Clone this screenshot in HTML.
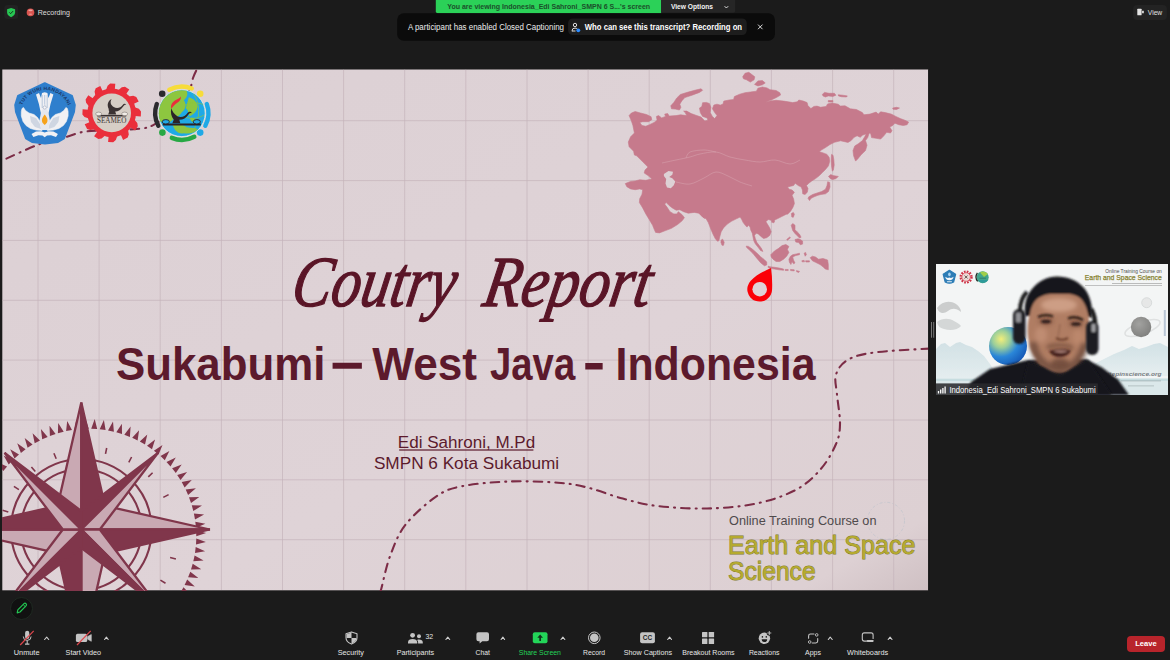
<!DOCTYPE html>
<html lang="en">
<head>
<meta charset="utf-8">
<title>Zoom Meeting</title>
<style>
*{box-sizing:border-box;margin:0;padding:0}
html,body{width:1170px;height:660px;overflow:hidden;background:#1b1b1b}
body{position:relative;font-family:"Liberation Sans",sans-serif;color:#e6e6e6}
.abs{position:absolute}
.t{position:absolute;white-space:nowrap;line-height:1}
/* slide */
#slide{left:0;top:0;width:1170px;height:660px;overflow:hidden}
/* thumb */
#thumb{left:936px;top:264px;width:232px;height:131px;overflow:hidden;background:#eef0f0}
/* toolbar */
#leave{left:1127.3px;top:635.5px;width:37.4px;height:16.3px;border-radius:4px;background:#b8242b}
#leave .t{left:0;width:37.4px;text-align:center;top:4.3px;font-size:7.6px;color:#fff;font-weight:bold}
#pen{left:10.3px;top:596.5px;width:23px;height:23px;border-radius:50%;background:#111;border:1px solid #1f2a22}
</style>
</head>
<body>
<!-- slide -->
<div class="abs" id="slide">
<svg id="slidesvg" width="1170" height="660" viewBox="0 0 1170 660">
<clipPath id="slideclip"><rect x="0" y="-0.5" width="927" height="522"/></clipPath>
<g transform="translate(2,69.5)" clip-path="url(#slideclip)">
<defs><linearGradient id="bgg" x1="0" y1="0" x2="1" y2="1"><stop offset="0" stop-color="#dcd0d4"/><stop offset="0.6" stop-color="#dfd3d7"/><stop offset="0.93" stop-color="#ddd0d3"/><stop offset="1" stop-color="#cfc0c3"/></linearGradient></defs>
<rect x="0.3" y="0" width="926" height="520.8" fill="url(#bgg)"/>
<path d="M36.0,0.3V520.5M97.1,0.3V520.5M158.2,0.3V520.5M219.4,0.3V520.5M280.5,0.3V520.5M341.6,0.3V520.5M402.7,0.3V520.5M463.8,0.3V520.5M525.0,0.3V520.5M586.1,0.3V520.5M647.2,0.3V520.5M708.3,0.3V520.5M769.4,0.3V520.5M830.6,0.3V520.5M891.7,0.3V520.5M0.5,51.2H926M0.5,111.1H926M0.5,170.9H926M0.5,230.8H926M0.5,290.6H926M0.5,350.5H926M0.5,410.3H926M0.5,470.2H926" stroke="#c4b4ba" stroke-width="1" fill="none" opacity="0.7"/>
<path d="M378.3,522.5C378.5,522.0 377.6,525.3 379.3,519.2C381.0,513.1 384.2,496.6 388.3,485.9C392.4,475.2 395.9,464.9 403.6,455.1C411.3,445.3 425.0,433.3 434.4,426.9C443.8,420.5 447.9,419.2 460.0,416.7C472.1,414.2 490.7,412.6 506.7,412.0C522.7,411.4 542.8,412.2 556.0,413.2C569.2,414.2 575.2,415.5 586.0,418.2C596.8,420.9 609.2,426.1 620.8,429.1C632.4,432.2 641.5,434.9 655.5,436.5C669.5,438.1 688.5,439.4 705.0,439.0C721.5,438.6 739.7,437.1 754.6,434.0C769.5,430.9 783.6,425.9 794.3,420.1C805.0,414.3 812.4,406.9 819.0,399.3C825.6,391.7 830.8,382.0 834.0,374.5C837.2,367.0 837.8,362.8 838.0,354.5C838.2,346.2 835.7,333.2 835.0,325.0C834.3,316.8 832.2,310.9 834.0,305.1C835.8,299.3 839.4,293.9 846.0,290.2C852.6,286.5 860.1,284.6 873.6,282.8C887.1,281.0 918.1,279.7 927.0,279.1" fill="none" stroke="#7c2c46" stroke-width="2.1" stroke-dasharray="8.5 6 1 6" stroke-linecap="round"/><path d="M4.4,89.1C9.8,86.8 26.5,78.7 36.6,75.0C46.7,71.3 56.8,69.4 65.0,67.2C73.2,65.0 74.0,63.1 85.6,61.8C97.2,60.5 123.3,60.6 134.5,59.5C145.7,58.4 145.9,58.4 152.5,54.9C159.1,51.4 168.2,44.1 174.0,38.5C179.8,32.9 184.2,26.5 187.0,21.5C189.8,16.5 189.7,12.2 191.0,8.5C192.3,4.8 194.3,1.0 195.0,-0.5" fill="none" stroke="#7c2c46" stroke-width="2.1" stroke-dasharray="8.5 6 1 6" stroke-linecap="round"/>
<polygon points="42.8,13.7 70.0,26.5 72.8,35.5 72.0,42.5 62.0,69.0 56.0,72.5 43.0,73.9 30.0,72.5 24.0,69.0 14.0,42.5 13.2,35.5 16.0,26.5" fill="#2f7fcd" stroke="#2f7fcd" stroke-width="2" stroke-linejoin="round"/>
<path id="twh" d="M20.2,35.3 A 25 25 0 0 1 65.8,35.3" fill="none"/>
<text font-family="Liberation Sans, sans-serif" font-size="4.9" font-weight="bold" fill="#1c3766"><textPath href="#twh" startOffset="50%" text-anchor="middle" textLength="58">TUT WURI HANDAYANI</textPath></text>
<path d="M20.0,39.0 L21.5,38.0 L23.5,41.0 L27.0,43.5 L32.0,45.0 L35.5,48.0 L38.0,52.0 L41.5,56.5 L40.0,61.0 L34.0,60.5 L28.5,59.0 L24.0,56.0 L21.0,52.0 L19.3,46.5 L19.3,42.0 Z" fill="#f1f1f4" stroke="#f1f1f4" stroke-width="0.6" stroke-linejoin="round"/>
<path d="M65.4,39.0 L63.9,38.0 L61.9,41.0 L58.4,43.5 L53.4,45.0 L49.9,48.0 L47.4,52.0 L43.9,56.5 L45.4,61.0 L51.4,60.5 L56.9,59.0 L61.4,56.0 L64.4,52.0 L66.1,46.5 L66.1,42.0 Z" fill="#f1f1f4" stroke="#f1f1f4" stroke-width="0.6" stroke-linejoin="round"/>
<path d="M28.0,46.5 L34.0,48.5 L38.0,54.5 L39.0,59.5 L33.0,57.5 L29.0,52.5 Z" fill="#cfd6e2" />
<path d="M57.4,46.5 L51.4,48.5 L47.4,54.5 L46.4,59.5 L52.4,57.5 L56.4,52.5 Z" fill="#cfd6e2" />
<path d="M34.0,25.0 L37.0,23.5 L39.0,28.5 L40.0,23.5 L42.7,22.8 L45.4,23.5 L46.4,28.5 L48.4,23.5 L51.4,25.0 L48.5,34.5 L46.8,42.5 L45.5,47.5 L39.9,47.5 L38.6,42.5 L36.9,34.5 Z" fill="#f1f1f4" />
<path d="M40.2,25.5V38.5M42.7,25.5V38.5M45.2,25.5V38.5" stroke="#9fb4d2" stroke-width="0.7" fill="none"/>
<path d="M42.7,34.5 L46.5,43.5 L48.0,51.5 L46.0,60.5 L39.4,60.5 L37.4,51.5 L38.9,43.5 Z" fill="#e6e8ee" />
<circle cx="42.7" cy="38.0" r="1.6" fill="#f6f6f8" stroke="#8d9bb5" stroke-width="0.5"/>
<path d="M42.7,45.0 c-3.400,4 -4,7.500 0,10.500 c4,-3 3.400,-6.500 0,-10.500z" fill="#f6a21b"/>
<path d="M29.5,64.5 L34.0,62.0 L39.0,61.7 L42.7,63.1 L46.4,61.7 L51.4,62.0 L55.9,64.5 L54.0,67.5 L49.0,65.8 L45.0,66.1 L42.7,67.7 L40.4,66.1 L36.4,65.8 L31.4,67.5 Z" fill="#f1f1f4" />
<circle cx="109.7" cy="43.4" r="24.3" fill="#ea2f3c"/>
<path d="M132.5,37.7L136.9,39.3L139.0,41.9L138.8,47.0L133.0,46.5ZM132.3,49.9L135.3,53.5L135.8,56.7L133.1,61.0L128.3,57.7ZM126.0,60.3L126.8,64.9L125.7,68.0L121.1,70.4L118.7,65.1ZM115.4,66.2L113.8,70.6L111.2,72.7L106.1,72.5L106.6,66.7ZM103.2,66.0L99.6,69.0L96.4,69.5L92.1,66.8L95.4,62.0ZM92.8,59.7L88.2,60.5L85.1,59.4L82.7,54.8L88.0,52.4ZM86.9,49.1L82.5,47.5L80.4,44.9L80.6,39.8L86.4,40.3ZM87.1,36.9L84.1,33.3L83.6,30.1L86.3,25.8L91.1,29.1ZM93.4,26.5L92.6,21.9L93.7,18.8L98.3,16.4L100.7,21.7ZM104.0,20.6L105.6,16.2L108.2,14.1L113.3,14.3L112.8,20.1ZM116.2,20.8L119.8,17.8L123.0,17.3L127.3,20.0L124.0,24.8ZM126.6,27.1L131.2,26.3L134.3,27.4L136.7,32.0L131.4,34.4Z" fill="#ea2f3c"/>
<circle cx="109.7" cy="43.4" r="19.3" fill="#d6cec6"/>
<path d="M106.7,39.4 c-2,-4 -1,-8 3,-10 c-2,3 -1,6 2,8 c3,2 7,1 9,-2 c1,-1.500 3,-1.500 3.500,0 c-1,-0.500 -2,0 -3,1.500 c-2,3 -5,5 -8,5 l1,3 h-8 l1,-3 c-0.500,-1 -0.500,-1.500 -0.500,-2.500z" fill="#3a3232"/>
<path d="M95.2,45.4 h29 v1.600 h-29z" fill="#3a3232"/>
<ellipse cx="96.7" cy="44.4" rx="3" ry="1.800" fill="#f1ece6" stroke="#6b6260" stroke-width="0.500"/>
<ellipse cx="122.7" cy="44.4" rx="3" ry="1.800" fill="#f1ece6" stroke="#6b6260" stroke-width="0.500"/>
<text x="109.7" y="53.7" font-family="Liberation Serif, serif" font-size="7.6" fill="#3d3535" text-anchor="middle" textLength="29.5" lengthAdjust="spacingAndGlyphs">SEAMEO</text>
<path d="M156.3,56.2 A26.6,26.6 0 0 1 154.8,34.6" fill="none" stroke="#2b2a2e" stroke-width="4.4" stroke-linecap="round"/>
<path d="M167.3,20.2 A26.6,26.6 0 0 1 189.8,19.0" fill="none" stroke="#f7dc3a" stroke-width="4.4" stroke-linecap="round"/>
<path d="M204.8,34.6 A26.6,26.6 0 0 1 203.3,56.2" fill="none" stroke="#1fa9e6" stroke-width="4.4" stroke-linecap="round"/>
<path d="M192.3,67.2 A26.6,26.6 0 0 1 169.8,68.4" fill="none" stroke="#27a844" stroke-width="4.4" stroke-linecap="round"/>
<circle cx="160.2" cy="24.3" r="3.3" fill="#2b2a2e"/>
<circle cx="198.2" cy="24.3" r="3.3" fill="#f7dc3a"/>
<circle cx="198.2" cy="63.1" r="3.3" fill="#1fa9e6"/>
<circle cx="160.4" cy="63.1" r="3.3" fill="#27a844"/>
<circle cx="179.8" cy="43.7" r="23.4" fill="#1fa9e6" stroke="#e9efe0" stroke-width="0.800"/>
<clipPath id="gclip"><circle cx="179.8" cy="43.7" r="23.0"/></clipPath>
<g clip-path="url(#gclip)">
<path d="M154.8,18.7 h28 c4,4 3,9 -1,12 c3,4 2,9 -2,12 c-3,5 -8,6 -12,10 c-5,2 -9,-2 -14,0 c-4,-4 -9,-6 -14,-4 l-12,2 v-34z" fill="#8dc63f"/>
<path d="M186.8,27.7 c4,1 8,4 9,9 c-1,5 -4,8 -8,10 c-2,-3 -1,-6 -4,-8 c1,-4 2,-7 3,-11z" fill="#8dc63f"/>
<path d="M170.8,55.7 c5,-2 10,-1 14,2 c4,1 8,0 11,2 c-3,4 -9,5 -14,4 c-5,1 -9,-2 -11,-8z" fill="#8dc63f"/>
<path d="M187.8,48.7 c3,-1 6,0 7,3 c-2,2 -5,2 -7,-3z" fill="#8dc63f"/>
<path d="M191.8,24.7 c6,9 7,22 0,36" fill="none" stroke="#8dc63f" stroke-width="0.700"/>
<path d="M182.8,35.7 c7,-3 14,-3 20,0" fill="none" stroke="#8dc63f" stroke-width="0.700"/>
<path d="M180.8,46.7 c7,3 14,3 21,-1" fill="none" stroke="#8dc63f" stroke-width="0.700"/>
</g>
<path d="M169.3,39.2 c-1,-4 1,-7 5,-9 c3,-1.500 4,-2 4.500,-3.500 c0.500,3 -1,5 -3.500,6.500 c-2.500,1.500 -4,3.500 -6,6z" fill="#ea2f3c"/>
<path d="M169.3,38.7 c1,3 3,6 6,8 c4,2 8,0 10,-3 c1.500,-2 4,-2 4.500,0 c-1.500,-0.800 -2.500,0 -3.500,1.500 c-2,3 -5,5 -9,5 l1,3.500 h-8 l1.500,-3.500 c-2.500,-3 -3.500,-7 -2.500,-11.500z" fill="#2b2328"/>
<path d="M160.8,53.9 h38 v2 h-38z" fill="#2b2328"/>
<ellipse cx="163.8" cy="52.3" rx="3.600" ry="2.200" fill="#1fa9e6" stroke="#2b2328" stroke-width="0.900"/>
<ellipse cx="194.8" cy="52.3" rx="3.600" ry="2.200" fill="#1fa9e6" stroke="#2b2328" stroke-width="0.900"/>
<path d="M623.3,114.1 628.6,111.9 633.2,111.4 637.7,110.3 643.8,110.8 649.8,109.6 646.8,106.6 642.2,103.5 643.0,100.5 646.0,97.6 640.7,92.3 634.7,86.3 632.4,85.5 631.6,81.7 627.1,77.2 626.3,72.6 628.6,67.3 632.4,63.5 630.9,56.0 629.4,51.4 627.1,46.1 629.4,43.5 633.2,42.0 638.5,43.5 644.5,45.0 649.1,47.2 649.8,50.2 646.5,52.2 640.7,52.2 637.7,52.9 640.0,56.0 643.8,56.7 647.5,55.2 652.1,52.9 655.1,50.7 654.4,46.9 656.6,46.1 659.7,48.4 663.5,46.9 662.7,44.6 665.7,44.1 667.2,46.6 674.1,46.1 678.6,45.3 684.7,46.1 683.2,43.1 681.6,41.6 684.7,41.6 689.2,44.1 693.8,45.7 699.1,47.6 702.8,51.4 705.9,50.7 705.1,48.4 700.6,46.9 698.3,43.1 697.5,38.5 699.8,37.0 700.6,33.2 704.4,32.9 707.4,34.0 708.9,37.8 708.2,43.1 710.4,46.9 712.7,49.1 715.0,46.1 712.7,43.1 710.4,39.3 711.9,35.5 715.0,34.7 718.0,35.5 718.0,35.7 721.0,34.6 721.8,31.6 727.1,30.5 731.6,30.0 732.4,27.0 737.7,24.7 743.0,23.2 748.3,22.5 754.4,21.7 755.9,18.7 760.4,17.5 765.0,18.4 768.0,20.2 774.1,21.0 777.8,23.2 778.6,25.5 774.8,27.8 770.3,30.0 766.5,31.6 763.5,33.1 768.0,31.6 774.1,30.8 781.6,31.6 786.2,32.3 790.7,33.1 795.3,32.3 796.8,30.5 801.3,31.6 805.1,33.1 805.9,36.1 808.9,39.1 811.9,36.9 815.0,36.6 818.0,37.6 818.0,37.8 824.1,37.0 825.6,34.4 830.1,33.5 836.2,34.7 838.5,36.6 843.0,36.3 848.3,39.3 854.4,40.0 860.4,43.1 861.9,45.3 868.0,44.6 874.1,42.6 876.3,44.6 878.6,42.3 883.2,43.1 889.2,44.6 893.8,46.9 898.3,49.1 902.8,50.7 906.6,52.6 905.1,55.2 901.3,56.0 896.8,55.2 893.0,53.7 890.7,56.0 887.7,57.5 890.0,61.3 888.5,63.5 884.7,62.8 881.6,66.6 878.6,69.6 874.1,68.8 869.5,68.1 868.8,64.3 867.2,63.5 865.7,68.1 863.5,71.1 865.0,75.7 863.5,81.0 858.9,85.5 855.9,89.3 853.6,91.6 851.6,86.3 851.0,81.0 852.8,76.4 856.6,74.1 860.4,71.1 862.7,67.3 864.2,64.3 860.4,65.8 858.2,67.8 855.1,66.3 852.1,67.8 849.1,71.1 846.0,72.9 838.6,71.3 832.5,72.8 828.0,75.0 823.5,78.1 819.7,80.3 817.4,82.3 821.2,83.4 825.0,84.9 827.2,87.9 827.7,91.7 826.5,96.3 823.5,100.0 820.4,103.1 817.4,106.1 813.6,109.1 809.8,111.4 806.8,113.7 804.5,116.0 806.0,119.0 805.3,122.8 803.0,125.0 800.7,124.3 800.4,120.5 799.2,117.5 796.2,116.0 793.2,113.7 791.6,116.0 788.6,116.7 785.6,117.5 787.1,119.7 790.1,120.5 792.4,122.8 790.1,125.8 791.6,129.6 792.4,134.1 790.9,137.9 788.6,141.7 785.6,144.7 784.4,144.7 779.8,147.0 775.3,149.3 772.2,150.8 770.0,153.1 769.2,150.8 766.2,150.0 763.9,152.3 765.4,154.6 767.7,158.4 769.2,162.2 767.7,166.0 764.7,168.2 761.6,169.0 758.6,166.7 756.3,164.4 754.1,163.7 752.5,166.0 753.3,169.0 754.8,172.8 757.1,175.8 759.4,178.8 760.9,181.9 758.6,181.1 756.3,178.1 753.3,174.3 751.8,171.3 751.0,167.5 750.3,163.7 748.8,160.7 748.0,157.6 746.5,155.7 745.0,157.6 743.5,156.1 741.2,153.1 739.7,150.0 738.2,147.5 734.4,149.3 729.8,151.6 725.3,154.6 721.5,158.4 719.2,162.2 717.7,167.5 716.9,171.3 715.4,171.7 713.2,169.0 710.9,164.4 708.6,159.1 706.3,153.1 704.1,149.3 700.3,147.0 698.0,144.0 702.8,149.0 700.6,147.5 696.8,143.7 692.2,142.9 686.2,143.7 681.6,142.2 677.8,140.2 674.1,140.7 670.3,138.4 667.2,136.1 664.2,133.1 662.7,134.6 665.0,137.6 668.0,142.2 671.8,144.4 674.8,144.4 676.3,142.2 680.1,145.2 682.4,148.2 680.1,151.3 675.6,155.0 669.5,158.8 663.5,161.1 657.4,163.4 653.6,162.9 652.1,159.6 650.6,155.8 647.5,150.5 643.8,144.4 640.7,138.4 637.4,133.1 637.7,129.3 640.0,124.7 640.7,120.2 637.7,119.4 633.2,120.2 628.6,119.4 624.8,117.2 623.3,114.1ZM668.8,36.3 671.8,32.9 674.8,28.4 678.3,25.0 686.2,22.6 693.8,20.5 699.1,19.3 700.6,20.8 697.5,22.9 690.0,25.7 682.8,28.1 679.8,31.4 677.8,34.7 678.9,37.8 677.4,40.5 673.3,39.6 669.5,39.3ZM740.7,7.3 743.0,3.8 746.8,2.8 749.8,5.0 752.8,7.3 752.1,10.3 748.3,12.6 744.5,10.3 741.5,9.3ZM752.5,14.9 755.9,11.4 760.4,11.1 763.2,13.4 760.4,15.3 755.9,16.4ZM820.3,24.9 822.5,22.9 827.1,23.8 832.4,23.8 833.9,25.7 830.9,26.9 826.3,26.4 823.3,27.5 821.0,26.4ZM836.2,25.3 840.7,25.7 845.3,26.4 844.5,27.5 839.2,27.2 836.5,26.4ZM826.3,31.0 830.9,31.0 830.9,32.5 826.3,32.5ZM890.7,38.5 894.5,37.8 897.5,38.5 894.5,40.0 891.0,39.7ZM829.5,84.9 831.0,85.7 831.8,90.2 832.2,95.5 831.3,100.8 830.3,101.6 829.5,96.3 829.2,90.2ZM826.5,106.9 828.8,105.0 831.0,106.1 836.3,106.9 834.1,109.1 831.0,109.9 828.8,109.6ZM825.7,112.2 827.7,112.9 828.0,117.5 826.5,122.0 823.5,124.3 818.9,125.0 815.9,125.8 812.1,127.3 809.1,128.8 807.5,131.1 806.0,128.8 806.8,127.3 810.6,125.0 815.1,123.5 819.7,122.0 823.5,119.7 825.0,116.0ZM789.4,144.0 791.3,142.9 792.4,144.7 791.3,147.8 789.8,147.5ZM770.4,151.6 772.2,150.8 772.5,152.6 771.0,153.5ZM719.2,170.5 720.7,169.7 722.2,172.8 721.5,175.8 720.0,175.8 718.9,172.8ZM744.2,176.6 746.5,176.9 750.3,179.6 754.8,183.4 758.6,187.2 762.4,190.2 764.7,192.5 764.7,195.5 762.4,196.3 758.6,193.2 754.8,188.7 751.0,184.1 747.2,180.3 744.7,178.1ZM766.2,196.6 768.0,197.3 772.5,197.8 777.1,198.5 781.6,199.6 781.6,200.8 777.1,200.3 772.5,199.6 768.0,198.8 766.2,198.1ZM783.2,199.9 786.2,200.0 786.2,201.1 783.2,201.0ZM788.5,199.9 792.2,200.3 792.2,201.4 788.6,201.1ZM794.5,201.1 797.5,201.9 796.8,202.9 794.7,202.3ZM768.8,185.2 772.5,181.4 776.3,179.1 780.1,176.1 783.9,175.0 786.9,176.9 785.4,179.9 786.9,182.9 784.7,186.7 781.6,189.7 777.8,192.0 774.1,192.0 771.0,189.7 769.2,187.5ZM786.9,189.7 788.5,186.7 790.7,185.2 794.5,184.4 797.5,183.7 797.5,185.2 793.8,186.0 790.7,187.5 791.5,190.5 793.0,193.5 791.5,194.3 790.0,192.0 788.9,195.0 787.4,192.8ZM802.1,183.7 803.6,182.9 804.4,185.2 803.2,186.7ZM808.2,188.2 810.4,186.7 813.5,187.5 816.5,189.7 821.0,189.0 825.6,190.5 826.3,195.0 826.3,200.3 823.3,199.6 821.0,197.3 818.0,195.0 813.5,192.8 810.4,191.3ZM799.8,191.3 802.1,190.8 802.5,192.3 800.1,192.3ZM803.6,191.3 807.4,191.3 807.4,192.5 803.9,192.5ZM789.2,155.7 790.7,154.1 793.0,155.7 793.0,160.2 795.3,162.5 797.5,164.7 799.1,167.8 797.5,168.5 795.3,166.3 793.0,164.0 790.7,161.0ZM793.0,170.0 796.0,169.3 798.3,170.0 800.6,171.6 800.6,174.6 798.3,175.3 796.8,173.1 793.8,172.6ZM784.7,170.0 787.7,167.5 788.5,168.2 785.4,170.8Z" fill="#c67a8c" stroke="#c67a8c" stroke-width="0.600" stroke-linejoin="round"/><path d="M661.9,104.4 666.5,101.4 671.0,102.2 670.3,105.2 667.2,107.5 670.3,108.8 673.3,111.9 671.8,115.7 668.8,118.7 665.0,117.9 663.5,114.1 664.2,109.6 661.9,106.5Z" fill="#ddd1d5"/><path d="M660.0,93.5C662.3,93.0 669.3,91.5 674.0,90.5C678.7,89.5 684.0,88.5 688.0,87.5C692.0,86.5 693.7,85.3 698.0,84.5C702.3,83.7 709.0,82.0 714.0,82.5C719.0,83.0 723.2,86.2 728.0,87.5C732.8,88.8 738.0,89.7 743.0,90.5C748.0,91.3 753.0,92.5 758.0,92.5C763.0,92.5 768.0,90.2 773.0,90.5C778.0,90.8 783.8,94.5 788.0,94.5C792.2,94.5 796.3,91.2 798.0,90.5" fill="none" stroke="#d9a9b4" stroke-width="0.600" opacity="0.800"/><path d="M684.0,88.5C684.7,87.5 685.0,83.8 688.0,82.5C691.0,81.2 697.7,80.5 702.0,80.5C706.3,80.5 712.0,82.2 714.0,82.5" fill="none" stroke="#d9a9b4" stroke-width="0.600" opacity="0.800"/><path d="M674.0,112.5C676.3,112.8 683.3,115.2 688.0,114.5C692.7,113.8 697.7,110.5 702.0,108.5C706.3,106.5 710.0,102.8 714.0,102.5C718.0,102.2 722.0,104.8 726.0,106.5C730.0,108.2 734.0,110.8 738.0,112.5C742.0,114.2 748.0,115.8 750.0,116.5" fill="none" stroke="#d9a9b4" stroke-width="0.600" opacity="0.800"/><path d="M769.0,198.4 C770.0,205.4 770.4,212.7 770.1,219.7 A12.4,12.4 0 1 1 748.5,211.4 C753.7,205.7 762.7,201.2 769.0,198.4 Z" fill="#fb0007"/><circle cx="757.7" cy="219.7" r="7.3" fill="#ded2d6"/>
<circle cx="884.0" cy="451.3" r="18.5" fill="none" stroke="#aebcc8" stroke-width="0.8" stroke-dasharray="3 2 1 2" opacity="0.55"/>
<g id="compass">
<path d="M89.2,359.2L95.2,359.5L92.7,349.6ZM97.7,359.8L103.6,360.5L101.9,350.4ZM106.0,360.9L111.9,362.2L111.0,351.9ZM114.3,362.8L120.0,364.5L119.9,354.2ZM122.3,365.2L127.9,367.4L128.6,357.1ZM130.2,368.3L135.6,370.9L137.1,360.7ZM137.8,372.0L143.0,375.0L145.3,365.0ZM145.0,376.3L150.0,379.7L153.1,369.9ZM151.9,381.2L156.6,385.0L160.5,375.4ZM158.5,386.6L162.8,390.7L167.4,381.5ZM164.5,392.4L168.5,396.9L173.8,388.1ZM170.1,398.8L173.8,403.5L179.7,395.1ZM175.2,405.5L178.5,410.5L185.1,402.6ZM179.7,412.6L182.6,417.9L189.8,410.5ZM183.7,420.1L186.1,425.6L193.9,418.8ZM187.0,427.8L189.0,433.5L197.3,427.4ZM189.8,435.8L191.3,441.6L200.0,436.1ZM191.9,444.0L193.0,449.9L202.1,445.1ZM193.3,452.3L194.0,458.3L203.4,454.2ZM194.1,460.7L194.3,466.7L204.1,463.4ZM194.3,469.1L194.0,475.1L203.9,472.6ZM193.7,477.6L193.0,483.5L203.1,481.8ZM192.6,485.9L191.3,491.8L201.6,490.9ZM190.7,494.2L189.0,499.9L199.3,499.8ZM188.3,502.2L186.1,507.8L196.4,508.5ZM185.2,510.1L182.6,515.5L192.8,517.0ZM181.5,517.7L178.5,522.9L188.5,525.2ZM177.2,524.9L173.8,529.9L183.6,533.0ZM172.3,531.8L168.5,536.5L178.1,540.4ZM166.9,538.4L162.8,542.7L172.0,547.3ZM161.1,544.4L156.6,548.4L165.4,553.7ZM154.7,550.0L150.0,553.7L158.4,559.6ZM148.0,555.1L143.0,558.4L150.9,565.0ZM140.9,559.6L135.6,562.5L143.0,569.7ZM133.4,563.6L127.9,566.0L134.7,573.8ZM125.7,566.9L120.0,568.9L126.1,577.2ZM117.7,569.7L111.9,571.2L117.4,579.9ZM109.5,571.8L103.6,572.9L108.4,582.0ZM101.2,573.2L95.2,573.9L99.3,583.3ZM92.8,574.0L86.8,574.2L90.1,584.0ZM84.4,574.2L78.4,573.9L80.9,583.8ZM75.9,573.6L70.0,572.9L71.7,583.0ZM67.6,572.5L61.7,571.2L62.6,581.5ZM59.3,570.6L53.6,568.9L53.7,579.2ZM51.3,568.2L45.7,566.0L45.0,576.3ZM43.4,565.1L38.0,562.5L36.5,572.7ZM35.8,561.4L30.6,558.4L28.3,568.4ZM28.6,557.1L23.6,553.7L20.5,563.5ZM21.7,552.2L17.0,548.4L13.1,558.0ZM15.1,546.8L10.8,542.7L6.2,551.9ZM9.1,541.0L5.1,536.5L-0.2,545.3ZM3.5,534.6L-0.2,529.9L-6.1,538.3ZM-1.6,527.9L-4.9,522.9L-11.5,530.8ZM-6.1,520.8L-9.0,515.5L-16.2,522.9ZM-10.1,513.3L-12.5,507.8L-20.3,514.6ZM-13.4,505.6L-15.4,499.9L-23.7,506.0ZM-16.2,497.6L-17.7,491.8L-26.4,497.3ZM-18.3,489.4L-19.4,483.5L-28.5,488.3ZM-19.7,481.1L-20.4,475.1L-29.8,479.2ZM-20.5,472.7L-20.7,466.7L-30.5,470.0ZM-20.7,464.3L-20.4,458.3L-30.3,460.8ZM-20.1,455.8L-19.4,449.9L-29.5,451.6ZM-19.0,447.5L-17.7,441.6L-28.0,442.5ZM-17.1,439.2L-15.4,433.5L-25.7,433.6ZM-14.7,431.2L-12.5,425.6L-22.8,424.9ZM-11.6,423.3L-9.0,417.9L-19.2,416.4ZM-7.9,415.7L-4.9,410.5L-14.9,408.2ZM-3.6,408.5L-0.2,403.5L-10.0,400.4ZM1.3,401.6L5.1,396.9L-4.5,393.0ZM6.7,395.0L10.8,390.7L1.6,386.1ZM12.5,389.0L17.0,385.0L8.2,379.7ZM18.9,383.4L23.6,379.7L15.2,373.8ZM25.6,378.3L30.6,375.0L22.7,368.4ZM32.7,373.8L38.0,370.9L30.6,363.7ZM40.2,369.8L45.7,367.4L38.9,359.6ZM47.9,366.5L53.6,364.5L47.5,356.2ZM55.9,363.7L61.7,362.2L56.2,353.5ZM64.1,361.6L70.0,360.5L65.2,351.4ZM72.4,360.2L78.4,359.5L74.3,350.1ZM80.8,359.4L86.8,359.2L83.5,349.4Z" fill="#80364b"/>
<path d="M2.8,467.4L-3.2,467.5M6.3,442.6L0.6,440.8M16.9,420.1L11.9,416.8M33.3,402.0L29.4,397.4M54.2,389.3L51.9,383.7M78.7,383.1L78.2,377.1M103.5,384.4L104.7,378.5M126.8,392.8L129.6,387.5M146.3,407.4L150.6,403.2M161.3,427.9L166.6,425.1M168.1,487.9L173.9,489.4M158.4,510.6L163.5,513.7M142.5,529.6L146.4,534.1M121.6,543.1L124.1,548.6" stroke="#80364b" stroke-width="1.6" fill="none"/>
<circle cx="79.3" cy="460.0" r="70.3" fill="none" stroke="#80364b" stroke-width="2.1"/>
<circle cx="79.3" cy="460.0" r="60.3" fill="none" stroke="#80364b" stroke-width="2.1"/>
<path d="M79.3,333.0L55.6,436.3L79.3,460.0Z" fill="#c9a9b3" stroke="#80364b" stroke-width="2.3" stroke-linejoin="miter"/><path d="M79.3,333.0L103.0,436.3L79.3,460.0Z" fill="#80364b" stroke="#80364b" stroke-width="2.3" stroke-linejoin="miter"/>
<path d="M207.9,460.0L103.0,436.3L79.3,460.0Z" fill="#c9a9b3" stroke="#80364b" stroke-width="2.3" stroke-linejoin="miter"/><path d="M207.9,460.0L103.0,483.7L79.3,460.0Z" fill="#80364b" stroke="#80364b" stroke-width="2.3" stroke-linejoin="miter"/>
<path d="M79.3,588.0L103.0,483.7L79.3,460.0Z" fill="#c9a9b3" stroke="#80364b" stroke-width="2.3" stroke-linejoin="miter"/><path d="M79.3,588.0L55.6,483.7L79.3,460.0Z" fill="#80364b" stroke="#80364b" stroke-width="2.3" stroke-linejoin="miter"/>
<path d="M-48.7,460.0L55.6,483.7L79.3,460.0Z" fill="#c9a9b3" stroke="#80364b" stroke-width="2.3" stroke-linejoin="miter"/><path d="M-48.7,460.0L55.6,436.3L79.3,460.0Z" fill="#80364b" stroke="#80364b" stroke-width="2.3" stroke-linejoin="miter"/>
<path d="M156.0,383.3L79.3,441.5L79.3,460.0Z" fill="#80364b" stroke="#80364b" stroke-width="2.3" stroke-linejoin="miter"/><path d="M156.0,383.3L97.8,460.0L79.3,460.0Z" fill="#c9a9b3" stroke="#80364b" stroke-width="2.3" stroke-linejoin="miter"/>
<path d="M156.0,536.7L97.8,460.0L79.3,460.0Z" fill="#c9a9b3" stroke="#80364b" stroke-width="2.3" stroke-linejoin="miter"/><path d="M156.0,536.7L79.3,478.5L79.3,460.0Z" fill="#80364b" stroke="#80364b" stroke-width="2.3" stroke-linejoin="miter"/>
<path d="M2.6,536.7L79.3,478.5L79.3,460.0Z" fill="#80364b" stroke="#80364b" stroke-width="2.3" stroke-linejoin="miter"/><path d="M2.6,536.7L60.8,460.0L79.3,460.0Z" fill="#c9a9b3" stroke="#80364b" stroke-width="2.3" stroke-linejoin="miter"/>
<path d="M2.6,383.3L60.8,460.0L79.3,460.0Z" fill="#c9a9b3" stroke="#80364b" stroke-width="2.3" stroke-linejoin="miter"/><path d="M2.6,383.3L79.3,441.5L79.3,460.0Z" fill="#80364b" stroke="#80364b" stroke-width="2.3" stroke-linejoin="miter"/>
</g>
<g transform="translate(0,237.0) skewX(-10) translate(0,-237.0)">
<text x="287.5" y="237.0" font-family="Liberation Serif, serif" font-size="72.0" font-weight="normal" font-style="italic" fill="#5a1527" textLength="163.5" lengthAdjust="spacingAndGlyphs" stroke="#5a1527" stroke-width="1.3">Coutry</text>
<text x="479.0" y="237.0" font-family="Liberation Serif, serif" font-size="72.0" font-weight="normal" font-style="italic" fill="#5a1527" textLength="167.0" lengthAdjust="spacingAndGlyphs" stroke="#5a1527" stroke-width="1.3">Report</text>
</g>
<text x="114.0" y="310.9" font-family="Liberation Sans, sans-serif" font-size="45.5" font-weight="bold" font-style="normal" fill="#5c1a2c" textLength="209.3" lengthAdjust="spacingAndGlyphs" >Sukabumi</text>
<text x="329.8" y="308.6" font-family="Liberation Sans, sans-serif" font-size="45.5" font-weight="bold" font-style="normal" fill="#5c1a2c" textLength="31.0" lengthAdjust="spacingAndGlyphs" stroke="#5c1a2c" stroke-width="1.4">–</text>
<text x="370.3" y="310.9" font-family="Liberation Sans, sans-serif" font-size="45.5" font-weight="bold" font-style="normal" fill="#5c1a2c" textLength="104.7" lengthAdjust="spacingAndGlyphs" >West</text>
<text x="488.0" y="310.9" font-family="Liberation Sans, sans-serif" font-size="45.5" font-weight="bold" font-style="normal" fill="#5c1a2c" textLength="85.2" lengthAdjust="spacingAndGlyphs" >Java</text>
<text x="581.5" y="308.3" font-family="Liberation Sans, sans-serif" font-size="45.5" font-weight="bold" font-style="normal" fill="#5c1a2c" textLength="21.0" lengthAdjust="spacingAndGlyphs" stroke="#5c1a2c" stroke-width="1">-</text>
<text x="613.5" y="310.9" font-family="Liberation Sans, sans-serif" font-size="45.5" font-weight="bold" font-style="normal" fill="#5c1a2c" textLength="200.0" lengthAdjust="spacingAndGlyphs" >Indonesia</text>
<text x="395.8" y="378.8" font-family="Liberation Sans, sans-serif" font-size="17.3" font-weight="normal" font-style="normal" fill="#5c1a2c" textLength="137.4" lengthAdjust="spacingAndGlyphs" >Edi Sahroni, M.Pd</text>
<rect x="397.2" y="379.9" width="134.2" height="1.2" fill="#5c1a2c"/>
<text x="371.9" y="399.8" font-family="Liberation Sans, sans-serif" font-size="17.3" font-weight="normal" font-style="normal" fill="#5c1a2c" textLength="185.3" lengthAdjust="spacingAndGlyphs" >SMPN 6 Kota Sukabumi</text>
<text x="727.0" y="455.4" font-family="Liberation Sans, sans-serif" font-size="12.2" font-weight="normal" font-style="normal" fill="#4f4a4c" textLength="147.5" lengthAdjust="spacingAndGlyphs" >Online Training Course on</text>
<text x="726.0" y="484.4" font-family="Liberation Sans, sans-serif" font-size="25.5" font-weight="normal" font-style="normal" fill="#b5aa2f" textLength="187.5" lengthAdjust="spacingAndGlyphs" stroke="#7f7a2c" stroke-width="0.9" paint-order="stroke">Earth and Space</text>
<text x="726.0" y="510.1" font-family="Liberation Sans, sans-serif" font-size="25.5" font-weight="normal" font-style="normal" fill="#b5aa2f" textLength="87.6" lengthAdjust="spacingAndGlyphs" stroke="#7f7a2c" stroke-width="0.9" paint-order="stroke">Science</text>
</g>
<rect x="928.3" y="69.5" width="0.9" height="521" fill="#0c0c0c"/>
</svg>
</div>

<!-- thumb -->
<div class="abs" id="thumb"><svg width="232" height="131" viewBox="0 0 232 131">
<rect width="232" height="131" fill="#f3f5f5"/>
<g filter="url(#sblur)">
<defs><linearGradient id="mtn" x1="0" y1="0" x2="0" y2="1"><stop offset="0" stop-color="#c9dce1"/><stop offset="1" stop-color="#e3edef"/></linearGradient></defs>
<path d="M0,85 L5,80 L9,79 L14,83 L20,79 L24,78 L30,81 L36,83 L42,87 L48,92 L54,100 L60,110 L60,119 L0,119 Z" fill="url(#mtn)" opacity="0.8"/>
<path d="M150,106 L158,100 L168,95 L178,90 L188,86 L196,82 L203,85 L210,83 L218,80 L224,79 L232,83 L232,112 L150,112 Z" fill="url(#mtn)" opacity="0.8"/>
<path d="M0,114 H232 V131 H0Z" fill="#dbe8ea"/>
<path d="M0,116 H232" stroke="#a9cbd2" stroke-width="1.2" opacity="0.8"/>
<path d="M1,44 C6,37 14,36 20,40 C23,42 25,45 25,48 C20,44 16,44 12,47 C8,50 3,50 1,44 Z" fill="#c3c6c6" opacity="0.85"/>
<path d="M1,58 C6,54 13,54 18,57 C21,59 24,60 25,62 C22,66 14,67 8,65 C4,64 2,62 1,58 Z" fill="#cfd2d2" opacity="0.85"/>
<defs><radialGradient id="pl" cx="0.4" cy="0.35" r="0.7"><stop offset="0" stop-color="#a2a2a0"/><stop offset="1" stop-color="#7f7f7d"/></radialGradient></defs>
<ellipse cx="206.5" cy="64" rx="18.5" ry="6" fill="none" stroke="#dfe1e1" stroke-width="1.6" transform="rotate(-20 206.5 64)"/>
<circle cx="205.1" cy="63" r="10.2" fill="url(#pl)"/>
<circle cx="210.7" cy="38.7" r="5" fill="#e6e7e7" stroke="#cfd2d2" stroke-width="0.7"/>
<rect x="227.8" y="46" width="2" height="26" fill="#aab9cc" opacity="0.8"/>
</g>
<defs><radialGradient id="glb" cx="0.32" cy="0.32" r="0.75"><stop offset="0" stop-color="#f3ee7a"/><stop offset="0.3" stop-color="#9ccf9a"/><stop offset="0.62" stop-color="#2a86d8"/><stop offset="1" stop-color="#1559b7"/></radialGradient></defs>
<circle cx="72" cy="82" r="19" fill="url(#glb)"/>
<defs><filter id="sblur" x="-10%" y="-10%" width="120%" height="120%"><feGaussianBlur stdDeviation="0.45"/></filter></defs>
<g filter="url(#sblur)">
<path d="M13.4,6.300 L19.600,10.300 L17.600,18 Q13.400,20.500 9.200,18 L7.200,10.300 Z" fill="#2d7db6" stroke="#2d7db6" stroke-width="1.2" stroke-linejoin="round"/>
<path d="M9.300,12.800 Q11,14.500 13.400,13.600 Q15.800,14.500 17.500,12.800 Q17.300,16 13.400,16.300 Q9.500,16 9.300,12.800Z" fill="#f4f6f8"/>
<ellipse cx="13.400" cy="10.300" rx="1.300" ry="1.900" fill="#a9d3f0"/>
<rect x="10.800" y="17.300" width="5.200" height="0.900" rx="0.400" fill="#e4eef5"/>
<circle cx="30.1" cy="13" r="5.500" fill="none" stroke="#cc3346" stroke-width="2.200" stroke-dasharray="1.700 1.180"/>
<circle cx="30.1" cy="13" r="4.300" fill="#ecdcd8" stroke="#d9495a" stroke-width="0.900"/>
<path d="M28.600,11.500 l3,3 m0,-3 l-3,3" stroke="#5a4a44" stroke-width="0.900"/>
<circle cx="46.7" cy="13.200" r="6" fill="#3fa48c"/>
<path d="M44,8.500 a6,6 0 0 1 8,1.500 l-4,3z" fill="#9fce4a"/>
<path d="M42,16 a6,6 0 0 0 10,0z" fill="#2f9a9a"/>
<path d="M41.400,8.800 a7.200,7.200 0 0 0 0.300,8.600" stroke="#1d2a22" stroke-width="1.300" fill="none"/>
<path d="M43.500,14.200 h6.500" stroke="#1d3a2a" stroke-width="0.500" opacity="0.7"/>
</g>
<text x="225.8" y="8.8" text-anchor="end" font-family="Liberation Sans, sans-serif" font-size="5" fill="#4d4d4d" textLength="56.5" lengthAdjust="spacingAndGlyphs">Online Training Course on</text>
<text x="225.8" y="16" text-anchor="end" font-family="Liberation Sans, sans-serif" font-size="7.4" fill="#868230" stroke="#868230" stroke-width="0.25" textLength="77" lengthAdjust="spacingAndGlyphs">Earth and Space Science</text>
<rect x="176" y="19" width="50" height="0.7" fill="#8c8c8c" opacity="0.8"/><rect x="149" y="21.2" width="77" height="0.7" fill="#8c8c8c" opacity="0.7"/>
<text x="225.5" y="112.300" text-anchor="end" font-family="Liberation Sans, sans-serif" font-size="6.2" font-style="italic" font-weight="bold" fill="#7b7f84" textLength="58" lengthAdjust="spacingAndGlyphs">qitepinscience.org</text>
<rect x="185" y="116.500" width="40" height="0.8" fill="#8d9a9c" opacity="0.7"/><rect x="192" y="121.500" width="26" height="0.8" fill="#8d9a9c" opacity="0.6"/>
<defs><filter id="pblur" x="-5%" y="-5%" width="110%" height="110%"><feGaussianBlur stdDeviation="0.9"/></filter><filter id="pblur2" x="-10%" y="-10%" width="120%" height="120%"><feGaussianBlur stdDeviation="2.2"/></filter></defs>
<g filter="url(#pblur)">
<path d="M28,131 L35,118 L54,105 L92,96 L150,95 L166,103.500 L182,115.500 L193,131 Z" fill="#17191f"/>
<path d="M89,52 C88,40 90,32 96,25 C102,17 112,12.500 121,12.500 C131,12.500 141,16 148,24 C154,31 157,42 156,54 L150,52 L95,52 Z" fill="#18171a"/>
<path d="M94,50 C95,42 99,35 104,33 C108,31 111,30 114,30 L134,30 C139,31 142,32 144,34 C148,37 151,44 152.500,52 C153.500,58 153.500,62 153,66 C152.500,73 151.500,78 150,82 C148,88 146,91 144,94 C141,98 139,101 136,103 C133,106 131,107 128,107.500 L116,107.500 C113,107 110,105 108,103 C104,100 102,97 100,94 C97,90 95,86 94,82 C92,76 91.500,70 91.500,66 C91.500,60 92,55 94,50 Z" fill="#b07d63"/>
</g>
<g filter="url(#pblur2)">
<ellipse cx="123" cy="41" rx="18" ry="7" fill="#cd9e85"/>
<ellipse cx="105" cy="71" rx="6" ry="8" fill="#bf8c72"/>
<ellipse cx="142" cy="73" rx="5.500" ry="8" fill="#bb876c"/>
<ellipse cx="110" cy="57" rx="8" ry="4.500" fill="#8c5d48" opacity="0.75"/>
<ellipse cx="140" cy="59.500" rx="8" ry="4.500" fill="#8c5d48" opacity="0.75"/>
<path d="M97,78 C99,96 111,105 123,105 C136,105 146,96 149,79" fill="none" stroke="#73503f" stroke-width="8" opacity="0.85"/>
<path d="M111,83.500 Q124,79 137,84" fill="none" stroke="#6f4a3a" stroke-width="4" opacity="0.8"/>
<ellipse cx="124" cy="99" rx="9" ry="5" fill="#6b4739" opacity="0.8"/>
</g>
<g filter="url(#pblur)">
<path d="M84,131 L92,98 L108,103.500 L124,112 L138,103.500 L152,96 L176,131 Z" fill="#17191f"/>
<path d="M102,53 q7,-3.500 15,-0.500" stroke="#2d1d19" stroke-width="2.400" fill="none"/><path d="M132,54.500 q8,-3 15,1.500" stroke="#2d1d19" stroke-width="2.400" fill="none"/>
<ellipse cx="110" cy="57.500" rx="5" ry="1.800" fill="#2f1f1c"/><ellipse cx="140" cy="60" rx="5" ry="1.800" fill="#2f1f1c"/>
<path d="M120,74 q6,3.500 12,0" stroke="#70432f" stroke-width="2.200" fill="none"/>
<path d="M124,60 q-1,8 -2,13" stroke="#9a6a52" stroke-width="1.600" fill="none"/>
<path d="M113,87 q11,-3.500 22,-0.500 q-3,6.500 -11,6.500 q-8,0 -11,-6z" fill="#47221f"/><path d="M117,87.300 q8,-1.500 15,0.200 q-7,2.400 -15,-0.200z" fill="#b58a80"/>
<path d="M84,47 C84,40 86,33 91,28" stroke="#1b1b1f" stroke-width="4" fill="none"/><path d="M155,45 C158,50 159,54 159,60" stroke="#1b1b1f" stroke-width="4.500" fill="none"/>
<rect x="77" y="45" width="12.500" height="35" rx="6" fill="#1c1c20"/><rect x="150" y="57" width="12.500" height="34" rx="6" fill="#1c1c20"/>
<rect x="80" y="48.500" width="5" height="10" rx="1" fill="#b9b9bd" opacity="0.75"/><rect x="155.500" y="60" width="4" height="8" rx="1" fill="#c4c4c8" opacity="0.8"/>
</g>
<rect x="0" y="119.400" width="161.800" height="11.600" fill="#2a2a2e" opacity="0.88"/>
<path d="M2.500,129.400v-2.500M4.700,129.400v-4M6.900,129.400v-5.500M9.100,129.400v-7" stroke="#fff" stroke-width="1.3"/>
<text x="13.400" y="129.100" font-family="Liberation Sans, sans-serif" font-size="8.2" fill="#fff" textLength="146.300" lengthAdjust="spacingAndGlyphs">Indonesia_Edi Sahroni_SMPN 6 Sukabumi</text>
</svg></div>
<svg class="abs" style="left:930px;top:320px" width="5" height="20" viewBox="0 0 5 20"><path d="M1.500,2V17.700M3.700,2V17.700" stroke="#8e8e8e" stroke-width="0.800"/></svg>

<!-- toolbar -->
<div class="abs" id="pen"></div>
<svg class="abs" style="left:15px;top:601px" width="14" height="14" viewBox="0 0 14 14"><path d="M2.200,11.800 L2.800,8.800 L9,2.600 Q10,1.800 11,2.700 Q12,3.700 11.200,4.700 L5,11 Z" fill="none" stroke="#23c552" stroke-width="1.200" stroke-linejoin="round"/><path d="M8.200,3.600 L10.300,5.700" stroke="#23c552" stroke-width="1"/></svg>
<svg class="abs" style="left:0;top:0;pointer-events:none" width="1170" height="660" viewBox="0 0 1170 660">
<rect x="4.3" y="5" width="13.8" height="14" rx="3" fill="#222222"/>
<path d="M11.100,7.900 L15.100,9.300 V12.300 C15.100,14.800 13.400,16.300 11.100,17.200 C8.800,16.300 7.100,14.800 7.100,12.300 V9.300 Z" fill="#27c653"/>
<path d="M9.300,12.400 L10.600,13.700 L13.100,11.100" fill="none" stroke="#14311c" stroke-width="1"/>
<circle cx="30.5" cy="12.4" r="3.8" fill="#d9544f"/>
<ellipse cx="30.5" cy="10.300" rx="2.200" ry="0.900" fill="#f0b5b0" opacity="0.85"/>
<ellipse cx="30.5" cy="14.300" rx="1.800" ry="0.800" fill="#eea9a4" opacity="0.7"/>
<text x="37.7" y="15.1" font-family="Liberation Sans, sans-serif" font-size="7.60" font-weight="normal" fill="#dedede" textLength="32.3" lengthAdjust="spacingAndGlyphs" >Recording</text>
<path d="M435.8,0 H661.2 V13.300 H437.800 Q435.800,13.300 435.800,11.300 Z" fill="#2bd158"/>
<text x="447.3" y="8.9" font-family="Liberation Sans, sans-serif" font-size="6.90" font-weight="bold" fill="#1b4f2a" textLength="202.8" lengthAdjust="spacingAndGlyphs" >You are viewing Indonesia_Edi Sahroni_SMPN 6 S...'s screen</text>
<path d="M661.2,0 H735.2 V10.800 Q735.200,12.800 733.200,12.800 H661.200 Z" fill="#262626"/>
<text x="670.9" y="8.9" font-family="Liberation Sans, sans-serif" font-size="6.90" font-weight="bold" fill="#f4f4f4" textLength="42.1" lengthAdjust="spacingAndGlyphs" >View Options</text>
<path d="M724.600,6.200 L726.400,8 L728.200,6.200" fill="none" stroke="#f0f0f0" stroke-width="0.900"/>
<rect x="397.2" y="13.3" width="377.7" height="27.4" rx="6.500" fill="#0b0b0b"/>
<text x="407.9" y="30.4" font-family="Liberation Sans, sans-serif" font-size="8.30" font-weight="normal" fill="#ececec" textLength="156.1" lengthAdjust="spacingAndGlyphs" >A participant has enabled Closed Captioning</text>
<rect x="568.1" y="18.5" width="178.6" height="16.5" rx="4.500" fill="#1d1d1d"/>
<circle cx="575" cy="25" r="1.700" fill="none" stroke="#f2f2f2" stroke-width="0.900"/>
<path d="M572.200,31 V30.200 Q572.200,28.100 575,28.100 Q576.300,28.100 577,28.600" fill="none" stroke="#f2f2f2" stroke-width="0.900" stroke-linecap="round"/>
<path d="M572.200,31 H575.500" stroke="#f2f2f2" stroke-width="0.900"/>
<circle cx="578.300" cy="30.300" r="1.900" fill="#2d8cff"/>
<text x="584.8" y="30.3" font-family="Liberation Sans, sans-serif" font-size="8.20" font-weight="bold" fill="#ffffff" textLength="157.3" lengthAdjust="spacingAndGlyphs" >Who can see this transcript? Recording on</text>
<path d="M758,24.600 L762.500,29.200 M762.500,24.600 L758,29.200" stroke="#ededed" stroke-width="0.900"/>
<rect x="1133.1" y="5.1" width="33.8" height="15" rx="4" fill="#232323"/>
<rect x="1137.300" y="8.700" width="4.300" height="6.600" rx="0.600" fill="#e4e4e4"/>
<rect x="1142.100" y="10.700" width="1.700" height="2.600" rx="0.300" fill="#e4e4e4"/>
<text x="1147.8" y="15.3" font-family="Liberation Sans, sans-serif" font-size="8.00" font-weight="normal" fill="#e0e0e0" textLength="14.4" lengthAdjust="spacingAndGlyphs" >View</text>
<rect x="25.1" y="630.8" width="4.2" height="8.2" rx="2.1" fill="#c4c4c4"/>
<path d="M23.3,636.5 a3.900,3.900 0 0 0 7.800,0" fill="none" stroke="#c4c4c4" stroke-width="1"/>
<path d="M27.2,640.4V643.6M25,644.1H29.400" stroke="#c4c4c4" stroke-width="1.1" fill="none"/>
<path d="M20.2,645L33.700,630.900" stroke="#e0474d" stroke-width="1.2"/>
<path d="M44.6,639.5L46.7,637.1L48.7,639.5" fill="none" stroke="#d0d0d0" stroke-width="1.1" stroke-linecap="round" stroke-linejoin="round"/>
<text x="13.8" y="654.5" font-family="Liberation Sans, sans-serif" font-size="7.7" font-weight="normal" fill="#e6e6e6" textLength="25.7" lengthAdjust="spacingAndGlyphs">Unmute</text>
<rect x="75.9" y="633.8" width="11.3" height="8.2" rx="1.6" fill="#c4c4c4"/>
<path d="M87.6,636.6L91.300,634.500V641.300L87.600,639.200Z" fill="#c4c4c4" stroke="#c4c4c4" stroke-width="0.600" stroke-linejoin="round"/>
<path d="M77,645L90.700,630.900" stroke="#e0474d" stroke-width="1.2"/>
<path d="M104.6,639.5L106.4,637.1L108.2,639.5" fill="none" stroke="#d0d0d0" stroke-width="1.1" stroke-linecap="round" stroke-linejoin="round"/>
<text x="65.6" y="654.5" font-family="Liberation Sans, sans-serif" font-size="7.7" font-weight="normal" fill="#e6e6e6" textLength="35.4" lengthAdjust="spacingAndGlyphs">Start Video</text>
<path d="M351.5,631.900 L357,633.700 V637.800 C357,641 354.600,643 351.5,644.100 C348.400,643 346,641 346,637.800 V633.700 Z" fill="#1b1b1b" stroke="#c4c4c4" stroke-width="1.1" stroke-linejoin="round"/>
<path d="M351.5,632.500 L346.600,634.200 V638 H351.5 Z" fill="#c4c4c4"/>
<path d="M351.5,638 H356.400 C356.300,640.800 354.300,642.600 351.5,643.500 Z" fill="#c4c4c4"/>
<text x="337.7" y="654.5" font-family="Liberation Sans, sans-serif" font-size="7.7" font-weight="normal" fill="#e6e6e6" textLength="26.1" lengthAdjust="spacingAndGlyphs">Security</text>
<circle cx="412.6" cy="635.3" r="2.4" fill="#c4c4c4"/>
<path d="M408,643.600 V642.300 C408,640.200 410,639.100 412.600,639.100 C415.200,639.100 417.200,640.200 417.200,642.300 V643.600 Z" fill="#c4c4c4"/>
<circle cx="419" cy="636.3" r="2" fill="#c4c4c4"/>
<path d="M418.100,643.600 V642.200 C418.100,641.200 417.700,640.400 417.100,639.900 C417.700,639.700 418.300,639.600 419,639.600 C421.200,639.600 422.800,640.600 422.800,642.400 V643.600 Z" fill="#c4c4c4"/>
<text x="425.4" y="639.2" font-family="Liberation Sans, sans-serif" font-size="7.5" font-weight="normal" fill="#e6e6e6" textLength="7.7" lengthAdjust="spacingAndGlyphs">32</text>
<path d="M445.9,639.5L447.8,637.1L449.7,639.5" fill="none" stroke="#d0d0d0" stroke-width="1.1" stroke-linecap="round" stroke-linejoin="round"/>
<text x="396.7" y="654.5" font-family="Liberation Sans, sans-serif" font-size="7.7" font-weight="normal" fill="#e6e6e6" textLength="37.4" lengthAdjust="spacingAndGlyphs">Participants</text>
<path d="M478.400,632.300 H487 Q489,632.300 489,634.300 V639.200 Q489,641.200 487,641.200 H482.300 L479.600,643.600 V641.200 H478.400 Q476.400,641.200 476.400,639.200 V634.300 Q476.400,632.300 478.400,632.300 Z" fill="#c4c4c4"/>
<path d="M501.1,639.5L502.9,637.1L504.6,639.5" fill="none" stroke="#d0d0d0" stroke-width="1.1" stroke-linecap="round" stroke-linejoin="round"/>
<text x="475.5" y="654.5" font-family="Liberation Sans, sans-serif" font-size="7.7" font-weight="normal" fill="#e6e6e6" textLength="14.3" lengthAdjust="spacingAndGlyphs">Chat</text>
<rect x="532.8" y="632.3" width="14.7" height="10.9" rx="2" fill="#23d559"/>
<path d="M540.150,634.600 L543,637.700 H541 V641 H539.300 V637.700 H537.300 Z" fill="#14311c"/>
<path d="M561.0,639.5L562.9,637.1L564.8,639.5" fill="none" stroke="#d0d0d0" stroke-width="1.1" stroke-linecap="round" stroke-linejoin="round"/>
<text x="518.8" y="654.5" font-family="Liberation Sans, sans-serif" font-size="7.7" font-weight="normal" fill="#23d559" textLength="42.1" lengthAdjust="spacingAndGlyphs">Share Screen</text>
<circle cx="594.3" cy="637.8" r="5.8" fill="none" stroke="#c4c4c4" stroke-width="1"/>
<circle cx="594.3" cy="637.8" r="4.3" fill="#c4c4c4"/>
<text x="583.1" y="654.5" font-family="Liberation Sans, sans-serif" font-size="7.7" font-weight="normal" fill="#e6e6e6" textLength="21.9" lengthAdjust="spacingAndGlyphs">Record</text>
<rect x="640.1" y="632.3" width="14.8" height="10.9" rx="2" fill="#c4c4c4"/>
<text x="647.5" y="640.1" text-anchor="middle" font-family="Liberation Sans, sans-serif" font-size="6.3" font-weight="bold" fill="#262626" textLength="9.400" lengthAdjust="spacingAndGlyphs">CC</text>
<path d="M667.7,639.5L669.6,637.1L671.5,639.5" fill="none" stroke="#d0d0d0" stroke-width="1.1" stroke-linecap="round" stroke-linejoin="round"/>
<text x="623.8" y="654.5" font-family="Liberation Sans, sans-serif" font-size="7.7" font-weight="normal" fill="#e6e6e6" textLength="48.2" lengthAdjust="spacingAndGlyphs">Show Captions</text>
<rect x="702.0" y="632.0" width="5.4" height="5.3" rx="0.5" fill="#c4c4c4"/>
<rect x="708.7" y="632.0" width="5.4" height="5.3" rx="0.5" fill="#c4c4c4"/>
<rect x="702.0" y="638.6" width="5.4" height="5.3" rx="0.5" fill="#c4c4c4"/>
<rect x="708.7" y="638.6" width="5.4" height="5.3" rx="0.5" fill="#c4c4c4"/>
<text x="682.2" y="654.5" font-family="Liberation Sans, sans-serif" font-size="7.7" font-weight="normal" fill="#e6e6e6" textLength="52.4" lengthAdjust="spacingAndGlyphs">Breakout Rooms</text>
<circle cx="764.4" cy="638.2" r="5.7" fill="#c4c4c4"/>
<circle cx="762.400" cy="636.900" r="0.800" fill="#1b1b1b"/><circle cx="766.300" cy="636.900" r="0.800" fill="#1b1b1b"/>
<path d="M761.600,639.300 H767.200 A2.800,2.800 0 0 1 761.600,639.300Z" fill="#1b1b1b"/>
<circle cx="769.300" cy="633" r="2.600" fill="#1b1b1b"/>
<path d="M769.300,631 V635 M767.300,633 H771.300" stroke="#c4c4c4" stroke-width="0.900"/>
<text x="748.9" y="654.5" font-family="Liberation Sans, sans-serif" font-size="7.7" font-weight="normal" fill="#e6e6e6" textLength="30.5" lengthAdjust="spacingAndGlyphs">Reactions</text>
<path d="M814,634 H810.500 Q808.600,634 808.600,635.900 V638.300 M812.300,643 H815.800 Q817.700,643 817.700,641.100 V638.500" fill="none" stroke="#c4c4c4" stroke-width="1.1" stroke-linecap="round"/>
<circle cx="816.700" cy="634.900" r="1.300" fill="none" stroke="#c4c4c4" stroke-width="0.900"/>
<circle cx="809.700" cy="642" r="1.300" fill="none" stroke="#c4c4c4" stroke-width="0.900"/>
<path d="M828.3,639.5L830.2,637.1L832.2,639.5" fill="none" stroke="#d0d0d0" stroke-width="1.1" stroke-linecap="round" stroke-linejoin="round"/>
<text x="805.0" y="654.5" font-family="Liberation Sans, sans-serif" font-size="7.7" font-weight="normal" fill="#e6e6e6" textLength="16.0" lengthAdjust="spacingAndGlyphs">Apps</text>
<path d="M866.500,641.100 H864.300 Q862.300,641.100 862.300,639.100 V634.900 Q862.300,632.900 864.300,632.900 H871.100 Q873.100,632.900 873.100,634.900 V638.500" fill="none" stroke="#c4c4c4" stroke-width="1.1" stroke-linecap="round"/>
<rect x="866.600" y="639.900" width="7.100" height="2" rx="0.800" fill="#c4c4c4"/>
<path d="M888.2,639.5L890.1,637.1L892.0,639.5" fill="none" stroke="#d0d0d0" stroke-width="1.1" stroke-linecap="round" stroke-linejoin="round"/>
<text x="847.1" y="654.5" font-family="Liberation Sans, sans-serif" font-size="7.7" font-weight="normal" fill="#e6e6e6" textLength="41.0" lengthAdjust="spacingAndGlyphs">Whiteboards</text>
</svg>
<div class="abs" id="leave"><div class="t">Leave</div></div>
</body>
</html>
